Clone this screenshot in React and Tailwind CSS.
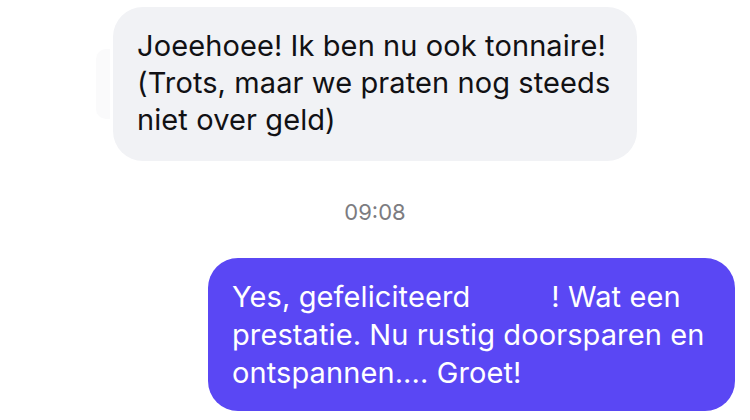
export default function App() {
  return (
    <div
      className="w-[750px] h-[420px] bg-white overflow-hidden flex flex-col"
      style={{ fontFamily: "Inter, 'Noto Sans', sans-serif" }}
    >
      {/* incoming message */}
      <div className="flex items-center pl-[96px] pt-[7px]">
        <div className="w-[14px] h-[70px] rounded-l-[10px] bg-[#fafafb]" />
        <div className="ml-[3px] w-[524px] h-[154px] rounded-[30px] bg-[#f1f2f5] px-[24px] pt-[20px] text-[29px] tracking-[0.1px] leading-[37px] text-[#111114]">
          Joeehoee! Ik ben nu ook tonnaire!
          <br />
          (Trots, maar we praten nog steeds
          <br />
          niet over geld)
        </div>
      </div>

      {/* time */}
      <div className="mt-[38px] text-center text-[22px] leading-[26px] text-[#7c7c81]">
        09:08
      </div>

      {/* outgoing message */}
      <div className="flex justify-end pr-[15px] mt-[33px]">
        <div className="w-[527px] h-[153px] rounded-[30px] bg-[#5a47f4] px-[24px] pt-[20px] text-[29px] tracking-[0.1px] leading-[38px] text-white">
          Yes, gefeliciteerd<span className="inline-block w-[81px]" />! Wat een
          <br />
          prestatie. Nu rustig doorsparen en
          <br />
          ontspannen.... Groet!
        </div>
      </div>
    </div>
  );
}
